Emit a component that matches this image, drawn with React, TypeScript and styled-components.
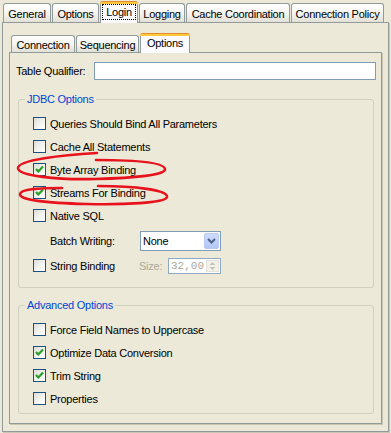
import * as React from 'react';
import styled, { createGlobalStyle, css } from 'styled-components';

const GlobalStyle = createGlobalStyle`
    html, body {
        margin: 0;
        padding: 0;
        background: #ECE9D8;
    }
    body {
        font-family: "Liberation Sans", Arial, sans-serif;
        font-size: 11px;
        color: #000;
    }
`;

const outerTabs = [
    { label: 'General', width: 48 },
    { label: 'Options', width: 47 },
    { label: 'Login', width: 38, active: true },
    { label: 'Logging', width: 46 },
    { label: 'Cache Coordination', width: 104 },
    { label: 'Connection Policy', width: 93 },
];

const innerTabs = [
    { label: 'Connection', width: 64 },
    { label: 'Sequencing', width: 63 },
    { label: 'Options', width: 50, active: true },
];

const CheckMark = () => (
    <svg width="11" height="11" viewBox="0 0 11 11">
        <path d="M2 5 L4.3 7.4 L9 2.6" fill="none" stroke="#21A121" strokeWidth="2.2" />
    </svg>
);

const CheckBox: React.FC<{ checked?: boolean }> = ({ checked }) => (
    <Box>{checked && <CheckMark />}</Box>
);

const CheckRow: React.FC<{ label: string; checked?: boolean }> = ({ label, checked }) => (
    <Row>
        <CheckBox checked={checked} />
        <span>{label}</span>
    </Row>
);

export default function App() {
    return (
        <Window>
            <GlobalStyle />
            <TabRow $inset={1} $height={22}>
                {outerTabs.map((t) => (
                    <Tab key={t.label} $w={t.width} $h={19} $active={t.active}>
                        {t.active ? <FocusText>{t.label}</FocusText> : t.label}
                    </Tab>
                ))}
            </TabRow>
            <OuterPanel>
                <TabRow $inset={2} $height={20}>
                    {innerTabs.map((t) => (
                        <Tab key={t.label} $w={t.width} $h={17} $active={t.active}>
                            {t.label}
                        </Tab>
                    ))}
                </TabRow>
                <InnerPanel>
                    <QualifierRow>
                        <QualifierLabel>Table Qualifier:</QualifierLabel>
                        <TextInput />
                    </QualifierRow>

                    <GroupBox $gap={12}>
                        <Legend>JDBC Options</Legend>
                        <GroupBody $top={6} $bottom={10}>
                            <CheckRow label="Queries Should Bind All Parameters" />
                            <CheckRow label="Cache All Statements" />
                            <CheckRow label="Byte Array Binding" checked />
                            <CheckRow label="Streams For Binding" checked />
                            <CheckRow label="Native SQL" />
                            <BatchRow>
                                <span>Batch Writing:</span>
                                <Select>
                                    <span>None</span>
                                    <DropButton>
                                        <svg width="9" height="6" viewBox="0 0 9 6">
                                            <path d="M1 1 L4.5 4.5 L8 1" fill="none" stroke="#4D6185" strokeWidth="2" />
                                        </svg>
                                    </DropButton>
                                </Select>
                            </BatchRow>
                            <StringRow>
                                <Row>
                                    <CheckBox />
                                    <span>String Binding</span>
                                </Row>
                                <Disabled>Size:</Disabled>
                                <Spinner>
                                    <SpinText>32,00</SpinText>
                                    <SpinButton>
                                        <svg width="7" height="10" viewBox="0 0 7 10">
                                            <path d="M0.5 4 L3.5 1 L6.5 4 Z M0.5 6 L3.5 9 L6.5 6 Z" fill="#C5C3B8" />
                                        </svg>
                                    </SpinButton>
                                </Spinner>
                            </StringRow>
                        </GroupBody>
                    </GroupBox>

                    <GroupBox $gap={10}>
                        <Legend>Advanced Options</Legend>
                        <GroupBody $top={6} $bottom={3}>
                            <CheckRow label="Force Field Names to Uppercase" />
                            <CheckRow label="Optimize Data Conversion" checked />
                            <CheckRow label="Trim String" checked />
                            <CheckRow label="Properties" />
                        </GroupBody>
                    </GroupBox>
                </InnerPanel>
            </OuterPanel>

            {/* hand-drawn red annotation loops over the two bindings */}
            <Annotations width="391" height="433" viewBox="0 0 391 433">
                <path
                    d="M97 153 C62 155, 18 160, 18 168 C18 176, 58 180, 95 179 C135 178, 166 175, 165 169 C164 162, 132 160, 96 160"
                />
                <path
                    d="M98 186 C135 186, 168 190, 167 197 C166 203, 122 205, 86 204 C46 203, 19 200, 20 194 C21 189, 40 188, 62 188"
                />
            </Annotations>
        </Window>
    );
}

const Window = styled.div`
    position: relative;
    box-sizing: border-box;
    width: 391px;
    height: 433px;
    padding-left: 2px;
    background: #ECE9D8;
    font-family: "Liberation Sans", Arial, sans-serif;
    font-size: 11px;
    letter-spacing: -0.25px;
    overflow: hidden;
`;

const TabRow = styled.div<{ $inset: number; $height: number }>`
    position: relative;
    z-index: 1;
    display: flex;
    align-items: flex-end;
    gap: 1px;
    height: ${(p) => p.$height}px;
    padding-left: ${(p) => p.$inset}px;
`;

const Tab = styled.div<{ $w: number; $h: number; $active?: boolean }>`
    position: relative;
    box-sizing: border-box;
    width: ${(p) => p.$w}px;
    height: ${(p) => p.$h}px;
    flex: none;
    display: flex;
    align-items: center;
    justify-content: center;
    padding-top: 1px;
    border: 1px solid #919B9C;
    border-bottom: none;
    border-radius: 3px 3px 0 0;
    background: linear-gradient(#FFFFFF, #F4F3EE 55%, #E2E0D6);
    white-space: nowrap;

    ${(p) =>
        p.$active &&
        css`
            height: ${p.$h + 3}px;
            margin-bottom: -1px;
            padding-top: 0;
            background: #FCFCFE;
            border-top: none;
            &::before {
                content: '';
                position: absolute;
                top: 0;
                left: -1px;
                right: -1px;
                height: 3px;
                border-radius: 3px 3px 0 0;
                background: linear-gradient(#E68B2C 1px, #FFC73C 1px);
            }
        `}
`;

const FocusText = styled.span`
    padding: 0 3px;
    line-height: 14px;
    border: 1px dotted #000;
`;

const OuterPanel = styled.div`
    box-sizing: border-box;
    width: 387px;
    height: 410px;
    border: 1px solid #919B9C;
    box-shadow: 1px 1px 0 #C9C6B6;
    padding: 9px 6px 7px;
    display: flex;
    flex-direction: column;
`;

const InnerPanel = styled.div`
    box-sizing: border-box;
    width: 373px;
    height: 372px;
    border: 1px solid #919B9C;
    box-shadow: 1px 1px 0 #C9C6B6;
    padding: 9px 5px 0 6px;
    display: flex;
    flex-direction: column;
`;

const QualifierRow = styled.div`
    display: flex;
    align-items: center;
    height: 18px;
`;

const QualifierLabel = styled.span`
    width: 78px;
    flex: none;
`;

const TextInput = styled.div`
    box-sizing: border-box;
    flex: 1;
    height: 18px;
    border: 1px solid #7F9DB9;
    background: #FFFFFF;
`;

const GroupBox = styled.fieldset<{ $gap: number }>`
    margin: ${(p) => p.$gap}px 2px 0 2px;
    padding: 0;
    min-width: 0;
    border: 1px solid #D0D0BF;
    border-radius: 3px;
`;

const Legend = styled.legend`
    margin-left: 6px;
    padding: 0 2px;
    line-height: 14px;
    color: #0046D5;
`;

const GroupBody = styled.div<{ $top: number; $bottom: number }>`
    display: flex;
    flex-direction: column;
    padding: ${(p) => p.$top}px 0 ${(p) => p.$bottom}px 14px;
`;

const Row = styled.div`
    display: flex;
    align-items: center;
    gap: 4px;
    height: 23px;
    white-space: nowrap;
`;

const Box = styled.span`
    box-sizing: border-box;
    width: 13px;
    height: 13px;
    flex: none;
    display: flex;
    align-items: center;
    justify-content: center;
    border: 1px solid #1C5180;
    background: linear-gradient(135deg, #DCDCD7 0%, #F3F3F0 55%, #FFFFFF 100%);
`;

const BatchRow = styled.div`
    display: grid;
    grid-template-columns: 90px 81px;
    align-items: center;
    height: 27px;
    padding-left: 17px;
`;

const Select = styled.div`
    box-sizing: border-box;
    height: 20px;
    display: flex;
    align-items: center;
    padding-left: 2px;
    border: 1px solid #7F9DB9;
    background: #FFFFFF;
`;

const DropButton = styled.span`
    box-sizing: border-box;
    margin-left: auto;
    margin-right: 1px;
    width: 15px;
    height: 16px;
    display: flex;
    align-items: center;
    justify-content: center;
    border: 1px solid #B7C9F4;
    border-radius: 2px;
    background: linear-gradient(#CEDBFC, #B3C6F5);
`;

const StringRow = styled.div`
    display: grid;
    grid-template-columns: 106px 29px 53px;
    align-items: center;
    height: 23px;
`;

const Disabled = styled.span`
    color: #ACA899;
`;

const Spinner = styled.div`
    box-sizing: border-box;
    height: 16px;
    display: flex;
    align-items: center;
    padding-left: 2px;
    border: 1px solid #8FA8C4;
    background: #FFFFFF;
`;

const SpinText = styled.span`
    font-family: "Liberation Mono", "Courier New", monospace;
    font-size: 11px;
    letter-spacing: 0;
    color: #ACA899;
`;

const SpinButton = styled.span`
    box-sizing: border-box;
    margin-left: auto;
    margin-right: 1px;
    width: 13px;
    height: 12px;
    display: flex;
    align-items: center;
    justify-content: center;
    background: #F2F1EA;
    border: 1px solid #E3E1D8;
`;

const Annotations = styled.svg`
    position: absolute;
    top: 0;
    left: 0;
    pointer-events: none;
    fill: none;
    stroke: #E8121C;
    stroke-width: 2.6;
    stroke-linecap: round;
`;
